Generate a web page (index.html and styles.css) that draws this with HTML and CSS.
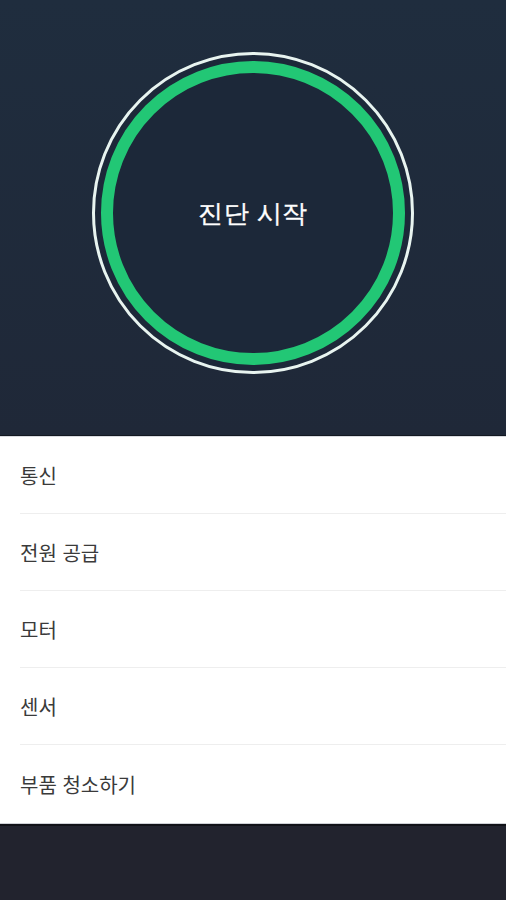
FILE: index.html
```html
<!DOCTYPE html>
<html lang="ko">
<head>
<meta charset="utf-8">
<link rel="stylesheet" href="styles.css">
</head>
<body>
<div class="screen">
  <header class="hero">
    <button class="start">
      <span class="ring">
        <span class="core">진단 시작</span>
      </span>
    </button>
  </header>
  <ul class="menu">
    <li class="item">통신</li>
    <li class="item">전원 공급</li>
    <li class="item">모터</li>
    <li class="item">센서</li>
    <li class="item">부품 청소하기</li>
  </ul>
  <footer class="foot"></footer>
</div>
</body>
</html>
```
FILE: styles.css
```css
html, body {
  margin: 0;
  padding: 0;
}
body {
  width: 506px;
  height: 900px;
  overflow: hidden;
  font-family: "Noto Sans CJK KR", "Noto Sans", sans-serif;
}
.screen {
  display: flex;
  flex-direction: column;
  height: 900px;
}
.hero {
  height: 436px;
  flex: none;
  display: flex;
  align-items: center;
  justify-content: center;
  padding-bottom: 10px;
  box-sizing: border-box;
  background: linear-gradient(#1f2d3e, #1f2838);
  border-bottom: 1px solid #121821;
}
.start {
  width: 322px;
  height: 322px;
  padding: 0;
  margin: 0;
  border-radius: 50%;
  border: 3px solid #e8f4f0;
  background: #1c2839;
  box-sizing: border-box;
  display: flex;
  align-items: center;
  justify-content: center;
  cursor: pointer;
}
.ring {
  width: 304px;
  height: 304px;
  border-radius: 50%;
  border: 12px solid #22c775;
  box-sizing: border-box;
  display: flex;
  align-items: center;
  justify-content: center;
  background: #1c2839;
}
.core {
  color: #ffffff;
  font-size: 25px;
  font-weight: 500;
  letter-spacing: 0.5px;
  -webkit-text-stroke: 0.4px #ffffff;
  margin-top: 2px;
}
.menu {
  list-style: none;
  margin: 0;
  padding: 0 0 0 20px;
  background: #ffffff;
  border-top: 1px solid #d9dbe0;
  border-bottom: 1px solid #cfd1d6;
}
.item {
  height: 77px;
  display: flex;
  align-items: center;
  font-size: 20px;
  color: #3a3a3a;
  border-bottom: 1px solid #eeeeee;
  box-sizing: border-box;
}
.item:last-child {
  border-bottom: none;
  height: 78px;
}
.foot {
  flex: 1;
  background: #22232e;
  border-top: 2px solid #111218;
}
```
